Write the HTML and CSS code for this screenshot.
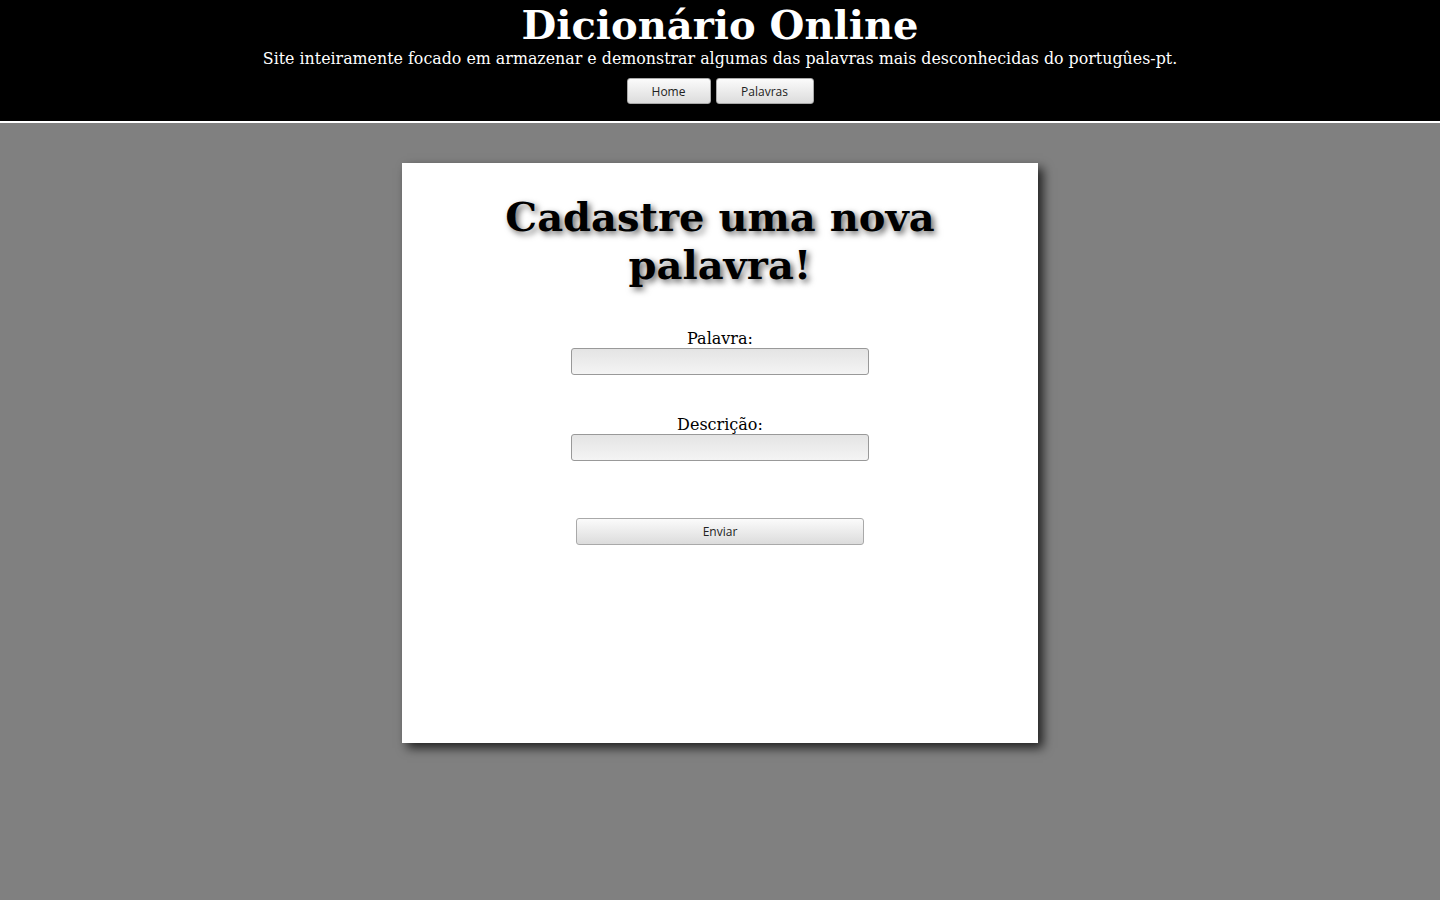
FILE: index.html
```html
<!DOCTYPE html>
<html lang="pt">
<head>
<meta charset="utf-8">
<title>Dicionário Online</title>
<link rel="stylesheet" href="styles.css">
</head>
<body>
<header class="site-header">
  <h1 class="site-title">Dicionário Online</h1>
  <p class="site-subtitle">Site inteiramente focado em armazenar e demonstrar algumas das palavras mais desconhecidas do portugûes-pt.</p>
  <nav class="site-nav">
    <button class="btn btn-home" type="button">Home</button>
    <button class="btn btn-words" type="button">Palavras</button>
  </nav>
</header>
<main class="content">
  <section class="card">
    <h2 class="card-title">Cadastre uma nova palavra!</h2>
    <form class="word-form">
      <div class="field">
        <label class="field-label" for="palavra">Palavra:</label>
        <input class="field-input" id="palavra" type="text">
      </div>
      <div class="field">
        <label class="field-label" for="descricao">Descrição:</label>
        <input class="field-input" id="descricao" type="text">
      </div>
      <button class="btn btn-submit" type="button">Enviar</button>
    </form>
  </section>
</main>
</body>
</html>
```
FILE: styles.css
```css
html, body {
  margin: 0;
  padding: 0;
}
body {
  background: #808080;
  font-family: "DejaVu Serif", serif;
  min-height: 900px;
}
.site-header {
  background: #000;
  color: #fff;
  text-align: center;
  border-bottom: 2px solid #fff;
  box-sizing: border-box;
  height: 123px;
  padding-top: 2px;
}
.site-title {
  margin: 0;
  font-size: 40px;
  line-height: 46px;
  font-weight: bold;
}
.site-subtitle {
  margin: 0;
  font-size: 15.85px;
  line-height: 22px;
}
.site-nav {
  display: flex;
  justify-content: center;
  gap: 5px;
  margin-top: 8px;
}
.btn {
  font-family: "Open Sans", sans-serif;
  font-size: 12px;
  color: #222;
  height: 26px;
  border: 1px solid #a9a9a9;
  border-radius: 3px;
  background: linear-gradient(#fbfbfb, #dcdcdc);
  padding: 0;
  cursor: pointer;
}
.btn-home { width: 84px; }
.btn-words { width: 98px; }
.content {
  display: flex;
  justify-content: center;
  padding-top: 40px;
}
.card {
  background: #fff;
  width: 636px;
  height: 580px;
  box-sizing: border-box;
  padding: 30px 60px 0;
  box-shadow: 5px 5px 10px rgba(0, 0, 0, 0.75);
  text-align: center;
}
.card-title {
  margin: 0 0 40px;
  font-size: 40px;
  line-height: 48px;
  font-weight: bold;
  color: #000;
  text-shadow: 3px 3px 6px rgba(0, 0, 0, 0.6);
}
.word-form {
  display: flex;
  flex-direction: column;
  align-items: center;
}
.field {
  display: flex;
  flex-direction: column;
  align-items: center;
  margin-bottom: 40px;
}
.field-label {
  font-size: 16px;
  line-height: 19px;
  color: #000;
}
.field-input {
  width: 298px;
  height: 27px;
  box-sizing: border-box;
  border: 1px solid #999;
  border-radius: 3px;
  background: linear-gradient(#e4e4e4, #f4f4f4);
  margin: 0;
}
.btn-submit {
  width: 288px;
  height: 27px;
  margin-top: 17px;
}
```
